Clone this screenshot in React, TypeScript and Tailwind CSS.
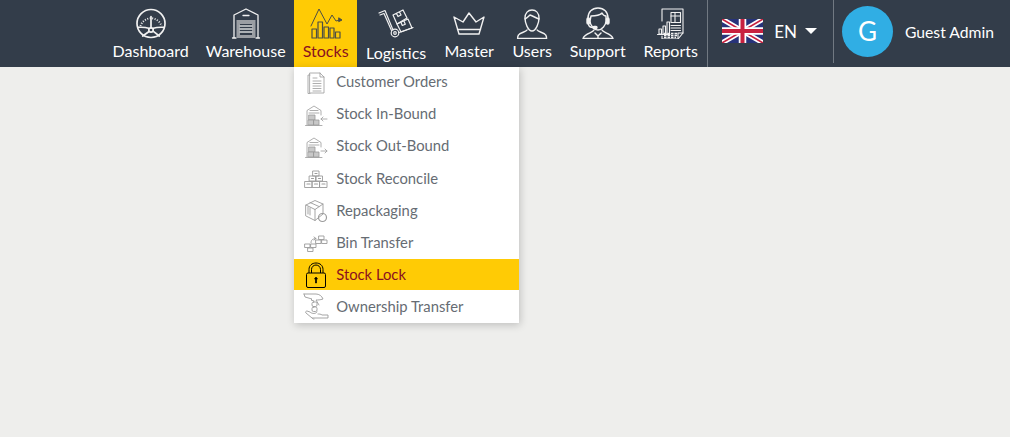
import type { ReactNode } from 'react';

function Svg({ w = 32, h = 32, width = 1.2, children }: { w?: number; h?: number; width?: number; children: ReactNode }) {
  return (
    <svg width={w} height={h} viewBox={`0 0 ${w} ${h}`} fill="none" stroke="currentColor" strokeWidth={width} strokeLinecap="round" strokeLinejoin="round">
      {children}
    </svg>
  );
}

const DashboardIcon = () => (
  <Svg width={1.7}>
    <circle cx="16" cy="16.500" r="14" />
    <path d="M5.500 19A11 11 0 0 1 26.500 19" strokeDasharray="1 1.500" strokeLinecap="butt" strokeWidth="2" />
    <path d="M16 9.500V21M3 20.300c4-.2 8 0 10.700 1M29 20.300c-4-.2-8 0-10.700 1M13.700 24.700 7.700 29M18.700 24.700l5.600 4.300" />
    <circle cx="16" cy="23" r="2.200" />
  </Svg>
);

const WarehouseIcon = () => (
  <Svg width={1.3}>
    <path d="M4 31V8L16 2l12 6v23M2.500 31H6M26 31h3.500M13 8.500h6" />
    <rect x="6.500" y="13" width="19" height="18" fill="#9a9ea3" stroke="none" />
    <rect x="10" y="17" width="12" height="11" fill="#333d4a" stroke="none" />
    <path d="M10 19h12M10 22h12M10 25h12" stroke="#d5d7d9" />
  </Svg>
);

const StocksIcon = () => (
  <Svg width={1}>
    <path d="M1 19 9 2l8 15 5-9 4 6 4-1" />
    <path d="m29 11 3 2-3 1.500z" fill="currentColor" />
    <rect x="2" y="22" width="4.500" height="9" strokeWidth="1.200" />
    <rect x="8" y="15" width="4.500" height="16" strokeWidth="1.200" />
    <rect x="14" y="20" width="4.500" height="11" strokeWidth="1.200" />
    <rect x="20" y="21" width="4" height="10" strokeWidth="1.200" />
    <rect x="25.500" y="25" width="4.500" height="6" strokeWidth="1.200" />
  </Svg>
);

const LogisticsIcon = () => (
  <Svg w={36}>
    <path d="M1 6 7 3.500l8 19.500M2 8l4-1.500 7.500 17" />
    <path d="m15 8 10-5 4 8-10 6zM18.500 6.500l1.500 3 3-1.500-1.500-3" />
    <path d="m19 17 11-5 4 9-11 4zM23 15.500l1.300 3 3-1.300-1.300-3" />
    <circle cx="17" cy="26" r="3.800" />
    <circle cx="17" cy="26" r="1.300" />
    <path d="m21 25.500 14-5" />
  </Svg>
);

const MasterIcon = () => (
  <Svg width={1.4}>
    <path d="M1 10 10 15l6-9 7 9 8-5-5 17H6z" />
    <path d="M4.500 22.500h23" />
  </Svg>
);

const UsersIcon = () => (
  <Svg width={1.4}>
    <path d="M9 11c0-5 3-8 7-8s7 3 7 8-3 13-7 13-7-8-7-13z" />
    <path d="M9 12c2-1 4-3 5-4 3 1 6 3 9 4" />
    <path d="M11 23c-1 2-7 2.500-8.500 5-.7 1-.9 2.500-.9 3.500h29c0-1-.2-2.500-.9-3.500-1.500-2.500-7.500-3-8.500-5" />
  </Svg>
);

const SupportIcon = () => (
  <Svg width={1.4}>
    <path d="M6 15v-4C6 5 10 1 16 1s10 4 10 10v4" />
    <path d="M9 9c4 0 9-1 11-3 1 2 2 3 4 3v5c0 4-4 9-8 9s-8-5-8-9z" />
    <rect x="5" y="11" width="2.500" height="6" rx="1.200" fill="currentColor" />
    <rect x="24.500" y="11" width="2.500" height="6" rx="1.200" fill="currentColor" />
    <path d="M6.500 17c0 2 2 3.500 5 3.500" />
    <rect x="11" y="19.500" width="4" height="2" rx="1" fill="currentColor" />
    <path d="M12 23c-1 3-9 3-11 8.500h30C29 26 21 26 20 23M13 26l3 3 3-3M16 29v2.500" />
  </Svg>
);

const ReportsIcon = () => (
  <Svg width={1.1}>
    <path d="M7 14V2h21v24l-5 6H7v-3" />
    <path d="M28 26h-5v6" />
    <rect x="16" y="5.500" width="9.500" height="10" />
    <path d="M16 9h9.500M20 5.500v10M16 18.500h9.500M16 21h9.500M16 23.500h9.500" />
    <path d="M4 27v-5h2.500v5zM8 27v-8h2.500v8zM12 27V15h2.500v12zM2.500 27.500H15" />
    <path d="M9 26.500h14M9 28.500h13M9 30.500h12" strokeDasharray="2.500 1" strokeWidth="1.300" strokeLinecap="butt" />
  </Svg>
);

const UkFlag = () => (
  <svg width="41" height="24" viewBox="0 0 41 24">
    <rect width="41" height="24" fill="#27337a" />
    <path d="M0 0 41 24M41 0 0 24" stroke="#fff" strokeWidth="5" />
    <path d="M0 0 41 24M41 0 0 24" stroke="#c8213f" strokeWidth="1.600" />
    <path d="M20.500 0v24M0 12h41" stroke="#fff" strokeWidth="7.500" />
    <path d="M20.500 0v24M0 12h41" stroke="#c8213f" strokeWidth="4" />
  </svg>
);

const CustomerOrdersIcon = () => (
  <Svg w={20} h={22} width={0.8}>
    <path d="M4 1h10l4 4v16H4z" />
    <path d="M14 1v4h4M7 6h4M7 9h8M7 11.500h8M7 14h8M7 16.500h8M7 19h8" />
    <path d="M4 3H2v18.500h2" />
  </Svg>
);

const Building = ({ arrow }: { arrow: ReactNode }) => (
  <Svg w={23} h={22} width={0.8}>
    <path d="M2 21V6.500L9 2l7 4.500V11M0.500 21.500H17" />
    <path d="M5 6.500h8M4 9h10" />
    <rect x="4" y="11" width="6" height="5" fill="#c8c8c8" stroke="#999" />
    <rect x="3.500" y="16" width="5" height="5" fill="#c8c8c8" stroke="#999" />
    <rect x="9" y="16" width="5" height="5" fill="#c8c8c8" stroke="#999" />
    {arrow}
  </Svg>
);

const ReconcileIcon = () => (
  <Svg w={24} h={18} width={0.9}>
    <rect x="9" y="1" width="6" height="5" />
    <rect x="5.500" y="6" width="6" height="5" />
    <rect x="12.500" y="6" width="6" height="5" />
    <rect x="1" y="11.500" width="7" height="6" />
    <rect x="8.500" y="11.500" width="7" height="6" />
    <rect x="16" y="11.500" width="7" height="6" />
    <path d="M3 14h3M10.500 14h3M18 14h3M7.500 8.500h2M14.500 8.500h2M11 3.500h2" strokeWidth="1.200" />
  </Svg>
);

const RepackagingIcon = () => (
  <Svg w={24} h={24} width={0.9}>
    <path d="m2 6 9-4.500L19 5v10l-8 6.500L2 17z" />
    <path d="m2 6 9 4.500L19 5M11 10.500v11M6 3.500l9 4" />
    <path d="M4 8v7M6 9v7" />
    <circle cx="18.500" cy="18.500" r="4" strokeWidth="1.200" />
  </Svg>
);

const BinTransferIcon = () => (
  <Svg w={24} h={17} width={0.9}>
    <rect x="1" y="9" width="5" height="3.500" />
    <rect x="7" y="9" width="5" height="3.500" />
    <rect x="4" y="13" width="5" height="3.500" />
    <rect x="12" y="5" width="5" height="3.500" />
    <rect x="18" y="5" width="5" height="3.500" />
    <rect x="15" y="1" width="5" height="3.500" />
    <path d="M7 8c0-3 1-4 5-4.500M10 2l2 1.500L10 5" />
  </Svg>
);

const LockIcon = () => (
  <svg width="20" height="26" viewBox="0 0 20 26" fill="none" stroke="#000" strokeWidth="1">
    <path d="M3 11V7.500C3 3.500 6 1 10 1s7 2.500 7 6.500V11" />
    <path d="M5.500 11V7.500C5.500 5 7.500 3 10 3s4.500 2 4.500 4.500V11" />
    <rect x="0.500" y="11" width="19" height="14.500" rx="1.500" />
    <path d="M10 15l-1.500 2h1v4h1v-4h1z" fill="#000" strokeWidth="0.700" />
  </svg>
);

const OwnershipIcon = () => (
  <Svg w={26} h={27} width={0.9}>
    <path d="M1 1h12c3 0 6 2 7 5-3 1-5 1-7 1l3 5" />
    <path d="M1 1l1 3 7 2-1 1 3 1" />
    <rect x="9" y="9" width="5" height="4.500" rx="1.500" />
    <rect x="9" y="14" width="5" height="4.500" rx="1.500" />
    <path d="M14 19c-1 2-5 2-7 0l-3-1c-1 0-2 1-1 2l6 5h16v-3h-6c-1-1-3-1-4-1" />
    <path d="M9 25c1 1 1 1 2 1" />
  </Svg>
);

const navItems = [
  { label: 'Dashboard', icon: <DashboardIcon />, width: 'w-[93px]' },
  { label: 'Warehouse', icon: <WarehouseIcon />, width: 'w-[97px]' },
  { label: 'Stocks', icon: <StocksIcon />, width: 'w-[63px]', active: true },
  { label: 'Logistics', icon: <LogisticsIcon />, width: 'w-[78px]', low: true },
  { label: 'Master', icon: <MasterIcon />, width: 'w-[68px]' },
  { label: 'Users', icon: <UsersIcon />, width: 'w-[58px]' },
  { label: 'Support', icon: <SupportIcon />, width: 'w-[73px]' },
  { label: 'Reports', icon: <ReportsIcon />, width: 'w-[73px]' },
];

const menuItems = [
  { label: 'Customer Orders', icon: <CustomerOrdersIcon />, lift: 'pb-[4px]' },
  {
    label: 'Stock In-Bound',
    icon: <Building arrow={<path d="M22 15h-6m2-2-2 2 2 2" />} />,
    lift: 'pb-[4px]',
  },
  {
    label: 'Stock Out-Bound',
    icon: <Building arrow={<path d="M16 15h6m-2-2 2 2-2 2" />} />,
    lift: 'pb-[4px]',
  },
  { label: 'Stock Reconcile', icon: <ReconcileIcon />, lift: 'pb-[2px]' },
  { label: 'Repackaging', icon: <RepackagingIcon />, lift: 'pb-[2px]' },
  { label: 'Bin Transfer', icon: <BinTransferIcon />, lift: 'pb-[2px]' },
  { label: 'Stock Lock', icon: <LockIcon />, active: true, lift: '' },
  { label: 'Ownership Transfer', icon: <OwnershipIcon />, lift: '' },
];

export default function App() {
  return (
    <div className="h-[437px] w-[1010px] overflow-hidden bg-[#eeeeec] font-['Lato',sans-serif]">
      <header className="flex h-[67px] items-stretch justify-end bg-[#333d4a] text-white">
        <nav className="flex">
          {navItems.map((item) => (
            <div key={item.label} className={`relative ${item.width}`}>
              <a
                className={`flex h-[67px] flex-col items-center text-base leading-5 ${
                  item.active ? 'bg-[#ffcb05] text-[#8a1020]' : 'text-white'
                }`}
              >
                <span className={`flex h-[39px] items-end ${item.active ? 'text-[#4d4f45]' : 'text-[#f1f1f1]'}`}>
                  {item.icon}
                </span>
                <span className={`whitespace-nowrap ${item.low ? 'mt-[4px]' : 'mt-[2px]'}`}>{item.label}</span>
              </a>
              {item.active && (
                <ul className="absolute left-0 top-[67px] z-10 w-[225px] bg-white shadow-[1px_2px_8px_rgba(0,0,0,0.2)]">
                  {menuItems.map((sub) => (
                    <li
                      key={sub.label}
                      className={`flex items-center text-[14.8px] ${
                        sub.active
                          ? 'h-[31px] bg-[#ffcb05] text-[#8a1020]'
                          : sub.label === 'Ownership Transfer'
                            ? 'h-[33px] text-[#666c73]'
                            : 'h-8 text-[#666c73]'
                      }`}
                    >
                      <span className={`flex w-[42px] justify-center pl-[2px] ${sub.active ? '' : 'text-[#9b9b9b]'}`}>
                        {sub.icon}
                      </span>
                      <span className={`whitespace-nowrap ${sub.lift}`}>{sub.label}</span>
                    </li>
                  ))}
                </ul>
              )}
            </div>
          ))}
        </nav>
        <div className="flex items-center border-l border-[#717982] pb-[5px] pl-[14px] pr-[16px]">
          <UkFlag />
          <span className="ml-[11px] text-[17px] leading-none">EN</span>
          <span className="ml-[8px] h-0 w-0 border-x-[6px] border-t-[6px] border-x-transparent border-t-white" />
        </div>
        <div className="mb-[4px] flex w-[177px] items-center border-l border-[#717982] pl-[8px]">
          <div className="flex size-[51px] items-center justify-center rounded-full bg-[#30aee4] text-[26px] text-white">
            G
          </div>
          <span className="ml-3 whitespace-nowrap pt-[3px] text-[15.700px]">Guest Admin</span>
        </div>
      </header>
    </div>
  );
}
